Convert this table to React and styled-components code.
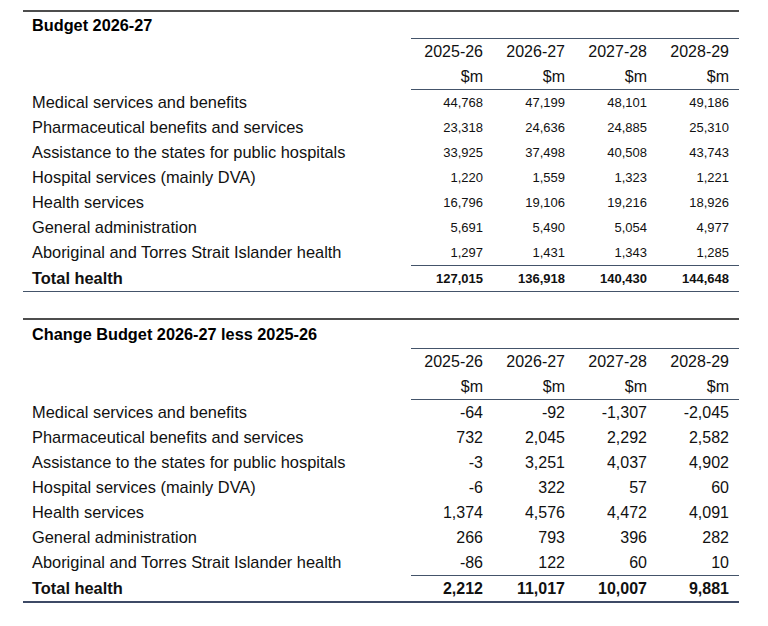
import styled, { createGlobalStyle } from "styled-components";

const GlobalStyle = createGlobalStyle`
  body {
    margin: 0;
    background: #fff;
    font-family: "Liberation Sans", Arial, sans-serif;
    color: #111;
  }
`;

const years = ["2025-26", "2026-27", "2027-28", "2028-29"];

const budget = {
  title: "Budget 2026-27",
  titleHeight: 26,
  small: true,
  rows: [
    ["Medical services and benefits", "44,768", "47,199", "48,101", "49,186"],
    ["Pharmaceutical benefits and services", "23,318", "24,636", "24,885", "25,310"],
    ["Assistance to the states for public hospitals", "33,925", "37,498", "40,508", "43,743"],
    ["Hospital services (mainly DVA)", "1,220", "1,559", "1,323", "1,221"],
    ["Health services", "16,796", "19,106", "19,216", "18,926"],
    ["General administration", "5,691", "5,490", "5,054", "4,977"],
    ["Aboriginal and Torres Strait Islander health", "1,297", "1,431", "1,343", "1,285"],
  ],
  total: ["Total health", "127,015", "136,918", "140,430", "144,648"],
};

const change = {
  title: "Change Budget 2026-27 less 2025-26",
  titleHeight: 28,
  small: false,
  thickBottom: true,
  rows: [
    ["Medical services and benefits", "-64", "-92", "-1,307", "-2,045"],
    ["Pharmaceutical benefits and services", "732", "2,045", "2,292", "2,582"],
    ["Assistance to the states for public hospitals", "-3", "3,251", "4,037", "4,902"],
    ["Hospital services (mainly DVA)", "-6", "322", "57", "60"],
    ["Health services", "1,374", "4,576", "4,472", "4,091"],
    ["General administration", "266", "793", "396", "282"],
    ["Aboriginal and Torres Strait Islander health", "-86", "122", "60", "10"],
  ],
  total: ["Total health", "2,212", "11,017", "10,007", "9,881"],
};

const Page = styled.div`
  padding: 10px 0 20px 23px;
  display: flex;
  flex-direction: column;
  gap: 26px;
`;

const Section = styled.section`
  width: 716px;
  border-top: 2px solid #4d4d4d;
  border-bottom: ${(p) => (p.$thick ? "2px solid #3d4a66" : "1px solid #44546a")};
`;

const Title = styled.div`
  height: ${(p) => p.$h}px;
  display: flex;
  align-items: center;
  padding-left: 9px;
  font-size: 16.3px;
  font-weight: bold;
  color: #000;
`;

const Row = styled.div`
  display: grid;
  grid-template-columns: 388px repeat(4, 82px);
  height: ${(p) => (p.$rule ? 26 : 25)}px;
`;

const Label = styled.div`
  display: flex;
  align-items: center;
  padding-left: 9px;
  padding-top: ${(p) => (p.$rule ? 1 : 0)}px;
  font-size: 16.4px;
  font-weight: ${(p) => (p.$bold ? "bold" : "normal")};
  color: #111;
  white-space: nowrap;
`;

const Num = styled.div`
  display: flex;
  align-items: center;
  justify-content: flex-end;
  padding-right: 10px;
  border-top: ${(p) => (p.$rule ? "1px solid #44546a" : "none")};
  font-size: ${(p) => (p.$small ? 13 : 16)}px;
  font-weight: ${(p) => (p.$bold ? "bold" : "normal")};
  color: #111;
  white-space: nowrap;
`;

const Table = ({ data }) => (
  <Section $thick={data.thickBottom}>
    <Title $h={data.titleHeight}>{data.title}</Title>
    <Row $rule>
      <Label $rule />
      {years.map((y) => (
        <Num key={y} $rule>
          {y}
        </Num>
      ))}
    </Row>
    <Row>
      <Label />
      {years.map((y) => (
        <Num key={y}>$m</Num>
      ))}
    </Row>
    {data.rows.map(([label, ...vals], i) => (
      <Row key={label} $rule={i === 0}>
        <Label $rule={i === 0}>{label}</Label>
        {vals.map((v, j) => (
          <Num key={j} $rule={i === 0} $small={data.small}>
            {v}
          </Num>
        ))}
      </Row>
    ))}
    <Row $rule>
      <Label $rule $bold>
        {data.total[0]}
      </Label>
      {data.total.slice(1).map((v, j) => (
        <Num key={j} $rule $bold $small={data.small}>
          {v}
        </Num>
      ))}
    </Row>
  </Section>
);

export default function App() {
  return (
    <>
      <GlobalStyle />
      <Page>
        <Table data={budget} />
        <Table data={change} />
      </Page>
    </>
  );
}
